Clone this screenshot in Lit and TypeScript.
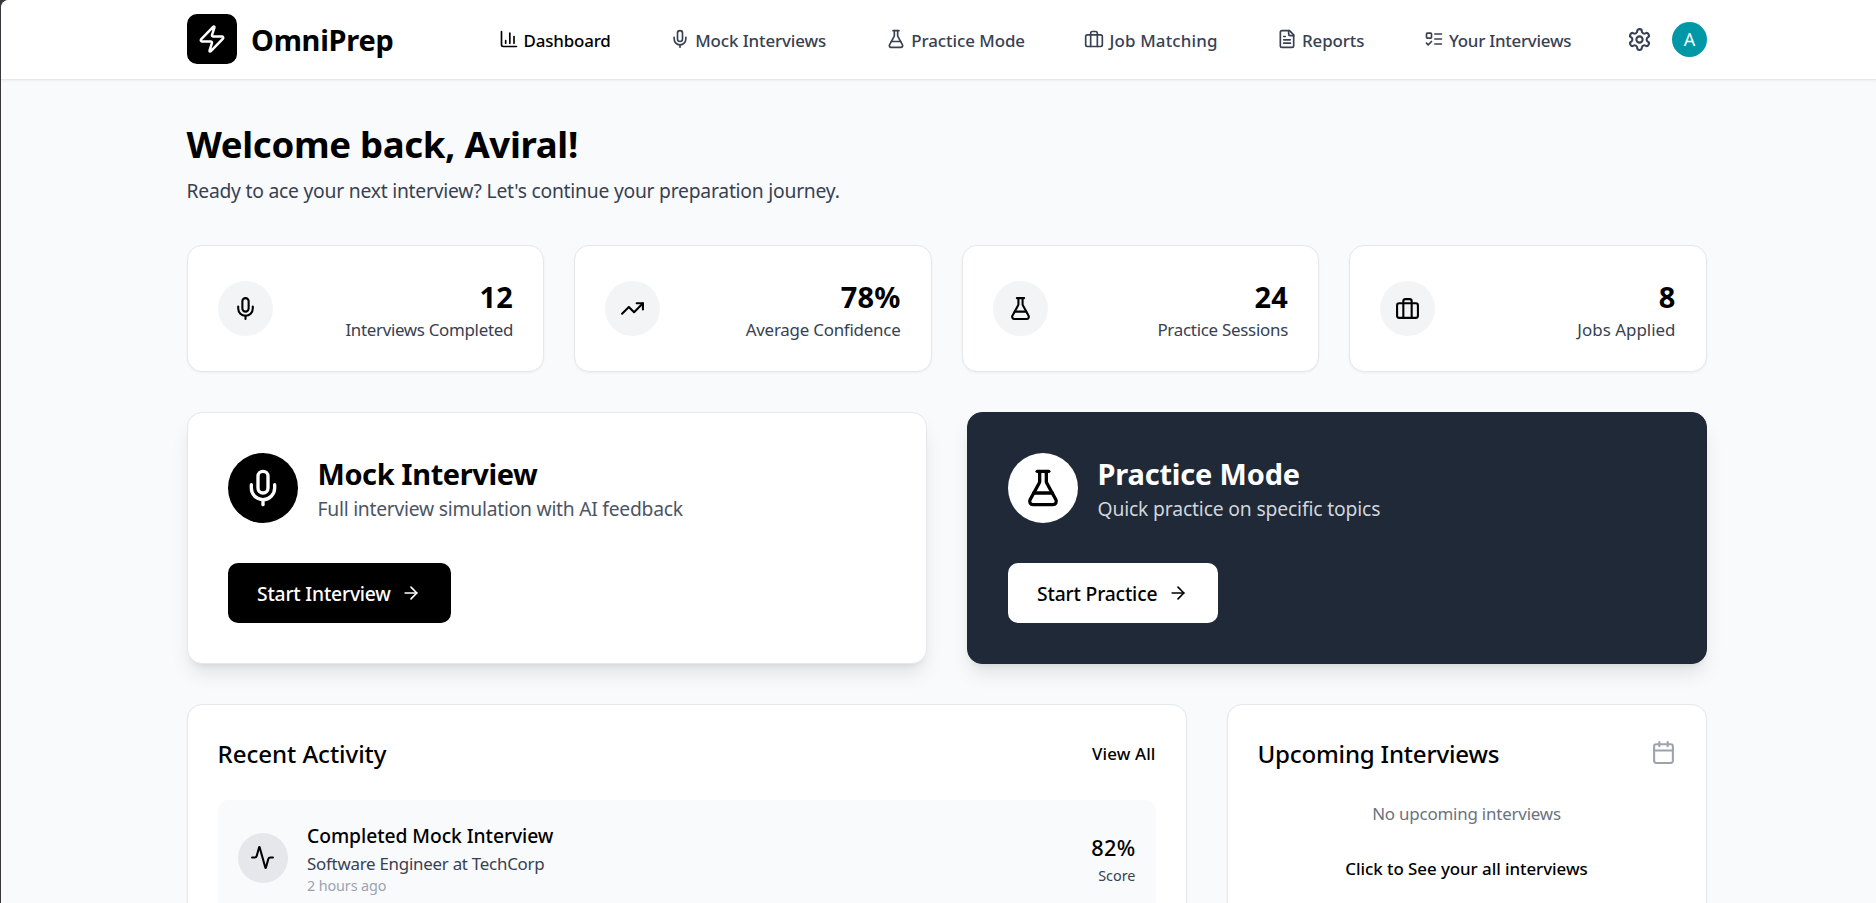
import { LitElement, html, css, svg, TemplateResult } from 'lit';
import { customElement, property } from 'lit/decorators.js';
import { styleMap } from 'lit/directives/style-map.js';

const ICONS: Record<string, TemplateResult> = {
  zap: svg`<path d="M4 14a1 1 0 0 1-.78-1.63l9.9-10.2a.5.5 0 0 1 .86.46l-1.92 6.02A1 1 0 0 0 13 10h7a1 1 0 0 1 .78 1.63l-9.9 10.2a.5.5 0 0 1-.86-.46l1.92-6.02A1 1 0 0 0 11 14z"/>`,
  chart: svg`<path d="M3 3v16a2 2 0 0 0 2 2h16"/><path d="M18 17V9"/><path d="M13 17V5"/><path d="M8 17v-3"/>`,
  mic: svg`<path d="M12 2a3 3 0 0 0-3 3v7a3 3 0 0 0 6 0V5a3 3 0 0 0-3-3Z"/><path d="M19 10v2a7 7 0 0 1-14 0v-2"/><path d="M12 19v3"/>`,
  flask: svg`<path d="M14 2v6a2 2 0 0 0 .245.96l5.51 10.08A2 2 0 0 1 18 22H6a2 2 0 0 1-1.755-2.96l5.51-10.08A2 2 0 0 0 10 8V2"/><path d="M6.453 15h11.094"/><path d="M8.5 2h7"/>`,
  briefcase: svg`<rect width="20" height="14" x="2" y="7" rx="2"/><path d="M16 21V5a2 2 0 0 0-2-2h-4a2 2 0 0 0-2 2v16"/>`,
  file: svg`<path d="M15 2H6a2 2 0 0 0-2 2v16a2 2 0 0 0 2 2h12a2 2 0 0 0 2-2V7Z"/><path d="M14 2v4a2 2 0 0 0 2 2h4"/><path d="M10 9H8"/><path d="M16 13H8"/><path d="M16 17H8"/>`,
  todo: svg`<rect x="3" y="5" width="6" height="6" rx="1"/><path d="m3 17 2 2 4-4"/><path d="M13 6h8"/><path d="M13 12h8"/><path d="M13 18h8"/>`,
  settings: svg`<path d="M12.22 2h-.44a2 2 0 0 0-2 2v.18a2 2 0 0 1-1 1.73l-.43.25a2 2 0 0 1-2 0l-.15-.08a2 2 0 0 0-2.73.73l-.22.38a2 2 0 0 0 .73 2.73l.15.1a2 2 0 0 1 1 1.72v.51a2 2 0 0 1-1 1.74l-.15.09a2 2 0 0 0-.73 2.73l.22.38a2 2 0 0 0 2.73.73l.15-.08a2 2 0 0 1 2 0l.43.25a2 2 0 0 1 1 1.73V20a2 2 0 0 0 2 2h.44a2 2 0 0 0 2-2v-.18a2 2 0 0 1 1-1.73l.43-.25a2 2 0 0 1 2 0l.15.08a2 2 0 0 0 2.73-.73l.22-.39a2 2 0 0 0-.73-2.73l-.15-.08a2 2 0 0 1-1-1.74v-.5a2 2 0 0 1 1-1.74l.15-.09a2 2 0 0 0 .73-2.73l-.22-.38a2 2 0 0 0-2.73-.73l-.15.08a2 2 0 0 1-2 0l-.43-.25a2 2 0 0 1-1-1.73V4a2 2 0 0 0-2-2z"/><circle cx="12" cy="12" r="3"/>`,
  trend: svg`<path d="M22 7 13.5 15.5 8.5 10.5 2 17"/><path d="M16 7h6v6"/>`,
  arrow: svg`<path d="M5 12h14"/><path d="m12 5 7 7-7 7"/>`,
  activity: svg`<path d="M22 12h-2.48a2 2 0 0 0-1.93 1.46l-2.35 8.36a.25.25 0 0 1-.48 0L9.24 2.18a.25.25 0 0 0-.48 0l-2.35 8.36A2 2 0 0 1 4.49 12H2"/>`,
  calendar: svg`<rect width="18" height="18" x="3" y="4" rx="2"/><path d="M16 2v4"/><path d="M8 2v4"/><path d="M3 10h18"/>`,
};

@customElement('line-icon')
export class LineIcon extends LitElement {
  static styles = css`
    :host { display: block; flex: none; }
    svg { display: block; fill: none; stroke: currentColor; stroke-width: 2; stroke-linecap: round; stroke-linejoin: round; }
  `;
  @property() name = '';
  @property({ type: Number }) size = 20;
  render() {
    return html`<svg width=${this.size} height=${this.size} viewBox="0 0 24 24">${ICONS[this.name]}</svg>`;
  }
}

interface Entry { icon: string; label: string; track: number; value?: string; }

const NAV: Entry[] = [
  { icon: 'chart', label: 'Dashboard', track: -0.17 },
  { icon: 'mic', label: 'Mock Interviews', track: -0.1 },
  { icon: 'flask', label: 'Practice Mode', track: -0.05 },
  { icon: 'briefcase', label: 'Job Matching', track: 0.17 },
  { icon: 'file', label: 'Reports', track: -0.1 },
  { icon: 'todo', label: 'Your Interviews', track: -0.25 },
];

const STATS: Entry[] = [
  { icon: 'mic', value: '12', label: 'Interviews Completed', track: -0.3 },
  { icon: 'trend', value: '78%', label: 'Average Confidence', track: -0.22 },
  { icon: 'flask', value: '24', label: 'Practice Sessions', track: -0.26 },
  { icon: 'briefcase', value: '8', label: 'Jobs Applied', track: 0.02 },
];

const tracking = (px: number) => styleMap({ letterSpacing: `${px}px` });

@customElement('app-root')
export class AppRoot extends LitElement {
  static styles = css`
    :host {
      display: block; height: 903px; overflow: hidden; background: #39363b; color: #000;
      font-family: 'Noto Sans', 'Open Sans', sans-serif; white-space: nowrap;
    }
    * { box-sizing: border-box; }
    h1, h2, h3, p { margin: 0; }
    button { font: inherit; border: 0; color: inherit; background: none; padding: 0; }
    .page { margin-left: 1px; height: 903px; overflow: hidden; background: #f9fafc; border-top-left-radius: 8px; }

    .header { height: 80px; padding-left: 186px; background: #fff; border-bottom: 1px solid #e5e7eb; box-shadow: 0 1px 2.5px rgba(0,0,0,.05); }
    .bar { width: 1520px; height: 78px; display: flex; align-items: center; }
    .logo { width: 50px; height: 50px; border-radius: 10px; background: #000; color: #fff; display: grid; place-items: center; flex: none; }
    .brand { width: 246.6px; padding: 1px 0 0 14px; font-size: 28.95px; font-weight: 700; line-height: 40px; letter-spacing: -.25px; flex: none; }
    .nav { display: grid; grid-template-columns: 171.6px 216px 198.2px 192.6px 147px 203px; flex: none; margin-left: 15px; }
    .link { display: flex; align-items: center; gap: 5px; color: #374151; font-size: 16.9px; font-weight: 500; line-height: 25px; }
    .link span { padding-top: 2.5px; }
    .link.active { color: #000; }
    .gear { color: #374151; }
    .avatar { width: 35px; height: 35px; margin-left: auto; border-radius: 50%; background: #0097a7; color: #fff; font-size: 18px; line-height: 35px; text-align: center; }

    .main { width: 1705.5px; padding: 40px 0 0 185.5px; display: flex; flex-direction: column; gap: 40px; }
    .welcome { display: grid; gap: 10px; }
    .welcome h1 { font-size: 36.6px; line-height: 45px; letter-spacing: -.34px; padding-top: 2px; margin-bottom: -2px; }
    .welcome p { font-size: 19.3px; line-height: 30px; letter-spacing: -.23px; padding-top: 1px; margin-bottom: -1px; color: #374151; }

    .card { background: #fff; border: 1px solid #e5e7eb; border-radius: 15px; }
    .stats { display: grid; grid-template-columns: repeat(4, 1fr); gap: 30px; }
    .stat { padding: 30px; display: flex; align-items: center; justify-content: space-between; box-shadow: 0 1px 2.5px rgba(0,0,0,.05); height: 127px; }
    .round { border-radius: 50%; display: grid; place-items: center; flex: none; }
    .round.sm { width: 55px; height: 55px; background: #f3f4f6; }
    .figures { text-align: right; padding-top: 2px; }
    .value { font-size: 28.95px; font-weight: 700; line-height: 40px; letter-spacing: .2px; }
    .label { font-size: 16.9px; line-height: 25px; color: #374151; }

    .actions { display: grid; grid-template-columns: 1fr 1fr; gap: 40px; }
    .action { height: 252px; padding: 40px; box-shadow: 0 12.5px 18.75px -3.75px rgba(0,0,0,.1), 0 5px 7.5px -5px rgba(0,0,0,.1); }
    .action.dark { background: #1f2937; border-color: #1f2937; color: #fff; }
    .top { display: flex; gap: 20px; margin-bottom: 40px; }
    .round.lg { width: 70px; height: 70px; background: #000; color: #fff; }
    .dark .round.lg { background: #fff; color: #000; }
    .top h2 { font-size: 28.95px; line-height: 40px; letter-spacing: -.38px; padding-top: 1px; margin-bottom: -1px; }
    .dark .top h2 { letter-spacing: -.16px; }
    .top p { font-size: 19.3px; line-height: 30px; letter-spacing: -.25px; padding-top: 1px; color: #4b5563; height: 30px; }
    .dark .top p { letter-spacing: -.15px; color: #d1d5db; }
    .cta { display: flex; align-items: center; justify-content: space-between; width: 223px; height: 60px; padding: 0 30px 0 29.5px; border-radius: 10px; background: #000; color: #fff; font-size: 19.3px; font-weight: 500; letter-spacing: -.2px; }
    .cta span { padding-top: 1px; }
    .dark .cta { width: 210px; background: #fff; color: #000; letter-spacing: -.17px; }

    .lower { display: grid; grid-template-columns: 1000px 480px; gap: 40px; }
    .panel { padding: 30px; height: 340px; box-shadow: 0 1px 2.5px rgba(0,0,0,.05); }
    .panel-head { display: flex; justify-content: space-between; align-items: center; height: 35px; margin-bottom: 30px; }
    .panel-head h2 { font-size: 24.1px; font-weight: 500; line-height: 35px; padding-top: 1px; letter-spacing: -.06px; }
    .panel-head .tight { letter-spacing: -.2px; }
    .view { font-size: 16.9px; font-weight: 500; letter-spacing: .12px; padding-top: 1px; }
    .cal { color: #9ca3af; }
    .item { display: flex; align-items: center; padding: 20px; height: 115px; border-radius: 10px; background: #f9fafc; }
    .round.md { width: 50px; height: 50px; background: #e5e7eb; margin-right: 19.5px; }
    .detail { flex: 1; padding-top: 1px; }
    .detail h3 { font-size: 19.3px; font-weight: 500; line-height: 30px; letter-spacing: -.06px; }
    .detail .role { font-size: 16.9px; line-height: 25px; letter-spacing: -.25px; color: #374151; }
    .detail .time { font-size: 14.4px; line-height: 20px; letter-spacing: -.12px; color: #9ca3af; }
    .result { text-align: right; }
    .score { font-size: 21.7px; font-weight: 500; line-height: 35px; letter-spacing: .3px; }
    .caption { font-size: 14.4px; line-height: 20px; padding-top: 1px; margin-bottom: -1px; color: #374151; }
    .empty { text-align: center; font-size: 16.9px; line-height: 25px; padding-top: 1px; letter-spacing: -.19px; color: #6b7280; }
    .more { display: block; margin: 30px auto 0; font-size: 16.9px; font-weight: 500; line-height: 25px; letter-spacing: -.05px; }
  `;

  private action(icon: string, title: string, text: string, cta: string, tone: string) {
    return html`<section class="card action ${tone}">
      <div class="top">
        <div class="round lg"><line-icon name=${icon} size="40"></line-icon></div>
        <div><h2>${title}</h2><p>${text}</p></div>
      </div>
      <button class="cta"><span>${cta}</span><line-icon name="arrow"></line-icon></button>
    </section>`;
  }

  render() {
    return html`<div class="page">
      <header class="header">
        <div class="bar">
          <div class="logo"><line-icon name="zap" size="30"></line-icon></div>
          <div class="brand">OmniPrep</div>
          <nav class="nav">
            ${NAV.map((n, i) => html`<a class="link ${i === 0 ? 'active' : ''}">
              <line-icon name=${n.icon}></line-icon><span style=${tracking(n.track)}>${n.label}</span></a>`)}
          </nav>
          <line-icon class="gear" name="settings" size="25"></line-icon>
          <div class="avatar">A</div>
        </div>
      </header>
      <main class="main">
        <div class="welcome">
          <h1>Welcome back, Aviral!</h1>
          <p>Ready to ace your next interview? Let's continue your preparation journey.</p>
        </div>
        <div class="stats">
          ${STATS.map(s => html`<div class="card stat">
            <div class="round sm"><line-icon name=${s.icon} size="25"></line-icon></div>
            <div class="figures">
              <div class="value">${s.value}</div>
              <div class="label" style=${tracking(s.track)}>${s.label}</div>
            </div>
          </div>`)}
        </div>
        <div class="actions">
          ${this.action('mic', 'Mock Interview', 'Full interview simulation with AI feedback', 'Start Interview', '')}
          ${this.action('flask', 'Practice Mode', 'Quick practice on specific topics', 'Start Practice', 'dark')}
        </div>
        <div class="lower">
          <section class="card panel">
            <div class="panel-head"><h2>Recent Activity</h2><button class="view">View All</button></div>
            <div class="item">
              <div class="round md"><line-icon name="activity" size="25"></line-icon></div>
              <div class="detail">
                <h3>Completed Mock Interview</h3>
                <p class="role">Software Engineer at TechCorp</p>
                <p class="time">2 hours ago</p>
              </div>
              <div class="result"><p class="score">82%</p><p class="caption">Score</p></div>
            </div>
          </section>
          <section class="card panel">
            <div class="panel-head"><h2 class="tight">Upcoming Interviews</h2><line-icon class="cal" name="calendar" size="25"></line-icon></div>
            <p class="empty">No upcoming interviews</p>
            <button class="more">Click to See your all interviews</button>
          </section>
        </div>
      </main>
    </div>`;
  }
}
